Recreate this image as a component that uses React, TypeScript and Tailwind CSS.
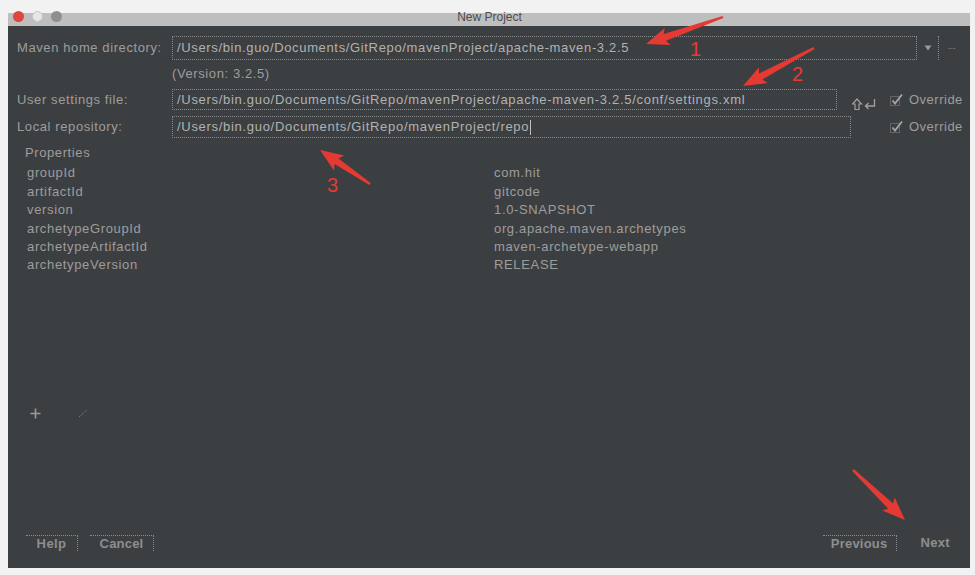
import React from 'react';

const font = { fontFamily: '"Liberation Sans", Arial, sans-serif' };

const properties: [string, string][] = [
  ['groupId', 'com.hit'],
  ['artifactId', 'gitcode'],
  ['version', '1.0-SNAPSHOT'],
  ['archetypeGroupId', 'org.apache.maven.archetypes'],
  ['archetypeArtifactId', 'maven-archetype-webapp'],
  ['archetypeVersion', 'RELEASE'],
];

// red annotation arrow: tail -> tip
function arrowPoints(x1: number, y1: number, x2: number, y2: number) {
  const dx = x2 - x1;
  const dy = y2 - y1;
  const len = Math.hypot(dx, dy);
  const ux = dx / len;
  const uy = dy / len;
  const nx = -uy;
  const ny = ux;
  const head = 20;
  const bx = x2 - ux * head;
  const by = y2 - uy * head;
  const pts = [
    [x1 + nx * 1.2, y1 + ny * 1.2],
    [bx + nx * 3.5, by + ny * 3.5],
    [bx - ux * 3 + nx * 9, by - uy * 3 + ny * 9],
    [x2, y2],
    [bx - ux * 3 - nx * 9, by - uy * 3 - ny * 9],
    [bx - nx * 3.5, by - ny * 3.5],
    [x1 - nx * 1.2, y1 - ny * 1.2],
  ];
  return pts.map((p) => p.map((v) => v.toFixed(1)).join(',')).join(' ');
}

function Check() {
  return (
    <svg width="16" height="14" viewBox="0 0 16 14" className="shrink-0">
      <rect x="1.5" y="3.5" width="9" height="9" fill="none" stroke="#8a8a8a" strokeDasharray="1 1" />
      <path d="M3.5 7.5 L6 10.5 L13 1.5" fill="none" stroke="#a5a5a5" strokeWidth="1.8" />
    </svg>
  );
}

function Label({ children }: { children: React.ReactNode }) {
  return (
    <div className="w-[164px] shrink-0 pl-[9px] text-[13px] tracking-[0.6px] text-[#9d9d9d]">{children}</div>
  );
}

export default function App() {
  return (
    <div className="relative w-[975px] h-[575px] bg-[#f2f2f2] overflow-hidden" style={font}>
      {/* title bar */}
      <div className="relative h-[26px]">
        <div className="absolute left-[8px] right-[5px] top-[13px] bottom-0 bg-[radial-gradient(circle,#bcbcbc_0.7px,transparent_0.9px)] bg-[length:2px_2px]" />
        <div className="relative flex items-center h-full pl-[13px] gap-[8px] pt-[7px]">
          <div className="w-[11px] h-[11px] rounded-full bg-[#e0443e]" />
          <div className="w-[11px] h-[11px] rounded-full border border-[#c5c5c5] bg-[#e6e6e6]" />
          <div className="w-[11px] h-[11px] rounded-full bg-[#8e8e8e]" />
        </div>
        <div className="absolute inset-0 flex justify-center items-center pt-[7px]">
          <span className="ml-[4px] text-[12px] text-[#4c4c4c]">New Project</span>
        </div>
      </div>

      {/* dialog body */}
      <div className="ml-[8px] w-[962px] h-[542px] bg-[#3c3f41] flex flex-col pt-[10px]">
        {/* maven home */}
        <div className="flex items-center h-[24px]">
          <Label>Maven home directory:</Label>
          <div className="w-[745px] h-[24px] border border-dotted border-[#8a8a8a] flex items-center pl-[4px] text-[13px] tracking-[0.65px] text-[#b2b2b2]">
            /Users/bin.guo/Documents/GitRepo/mavenProject/apache-maven-3.2.5
          </div>
          <svg width="8" height="6" viewBox="0 0 8 6" className="ml-[7px]">
            <path d="M0.5 0.5 H7.5 L4 5.5 Z" fill="#9a9a9a" />
          </svg>
          <div className="ml-[6px] h-[24px] border-l border-dotted border-[#8a8a8a]" />
          <span className="ml-[9px] text-[9px] leading-none text-[#9a9a9a] pb-[3px]">...</span>
        </div>

        <div className="flex items-center h-[16px] mt-[6px]">
          <div className="w-[164px]" />
          <span className="text-[13px] tracking-[0.6px] text-[#9d9d9d]">(Version: 3.2.5)</span>
        </div>

        {/* user settings */}
        <div className="flex items-center h-[21px] mt-[7px]">
          <Label>User settings file:</Label>
          <div className="w-[665px] h-[21px] border border-dotted border-[#8a8a8a] flex items-center pl-[4px] text-[13px] tracking-[0.7px] text-[#b2b2b2]">
            /Users/bin.guo/Documents/GitRepo/mavenProject/apache-maven-3.2.5/conf/settings.xml
          </div>
          <svg width="24" height="13" viewBox="0 0 24 13" className="ml-[15px] mt-[10px]">
            <path d="M5 1 L9.5 6 H7 V11.5 H3 V6 H0.5 Z" fill="none" stroke="#a0a0a0" strokeWidth="1.2" />
            <path d="M22.5 1 V8 H14 M16.5 5 L13.5 8 L16.5 11" fill="none" stroke="#a0a0a0" strokeWidth="1.3" />
          </svg>
          <div className="ml-[13px] flex items-center gap-[4px]">
            <Check />
            <span className="text-[13px] tracking-[0.5px] text-[#9d9d9d]">Override</span>
          </div>
        </div>

        {/* local repo */}
        <div className="flex items-center h-[22px] mt-[6px]">
          <Label>Local repository:</Label>
          <div className="w-[679px] h-[22px] border border-dotted border-[#8a8a8a] flex items-center pl-[4px] text-[13px] tracking-[0.7px] text-[#b2b2b2]">
            /Users/bin.guo/Documents/GitRepo/mavenProject/repo
            <span className="ml-[1px] w-px h-[15px] bg-[#c0c0c0]" />
          </div>
          <div className="ml-[38px] flex items-center gap-[4px]">
            <Check />
            <span className="text-[13px] tracking-[0.5px] text-[#9d9d9d]">Override</span>
          </div>
        </div>

        {/* properties */}
        <div className="h-[16px] mt-[7px] pl-[17px] flex items-center text-[13px] tracking-[0.6px] text-[#9d9d9d]">
          Properties
        </div>
        <div className="mt-[3px] pl-[19px] flex flex-col">
          {properties.map(([k, v]) => (
            <div key={k} className="h-[18.4px] flex items-center text-[13px] tracking-[0.65px] text-[#9d9d9d]">
              <span className="w-[467px]">{k}</span>
              <span>{v}</span>
            </div>
          ))}
        </div>

        <div className="flex-1" />

        {/* toolbar */}
        <div className="h-[18px] flex items-center pl-[22px] gap-[37px]">
          <svg width="11" height="11" viewBox="0 0 11 11">
            <path d="M5.5 0.5 V10.5 M0.5 5.5 H10.5" stroke="#9a9a9a" strokeWidth="1.6" />
          </svg>
          <svg width="10" height="9" viewBox="0 0 10 9">
            <path d="M1 8 L9 1" stroke="#8a8a8a" strokeWidth="1" strokeDasharray="1 1" />
          </svg>
        </div>

        {/* footer */}
        <div className="mt-[111px] mb-[15px] h-[20px] flex items-center pl-[18px] pr-[20px]">
          <div className="w-[52px] h-[16px] border-t border-r border-dotted border-[#8a8a8a] flex items-center justify-center text-[13px] font-bold tracking-[0.4px] text-[#8e8e8e]">
            Help
          </div>
          <div className="ml-[12px] w-[64px] h-[16px] border-t border-r border-dotted border-[#8a8a8a] flex items-center justify-center text-[13px] font-bold tracking-[0.2px] text-[#8e8e8e]">
            Cancel
          </div>
          <div className="flex-1" />
          <div className="w-[74px] h-[16px] border-t border-r border-dotted border-[#8a8a8a] flex items-center justify-center text-[13px] font-bold tracking-[0.2px] text-[#8e8e8e]">
            Previous
          </div>
          <div className="ml-[24px] text-[13px] font-bold tracking-[0.3px] text-[#8e8e8e]">Next</div>
        </div>
      </div>

      {/* red annotations */}
      <svg className="absolute inset-0 pointer-events-none" width="975" height="575">
        <polygon points={arrowPoints(723, 17, 646, 44)} fill="#e53a33" />
        <polygon points={arrowPoints(814, 48, 743, 86)} fill="#e53a33" />
        <polygon points={arrowPoints(370, 184, 320, 150)} fill="#e53a33" />
        <polygon points={arrowPoints(853, 470, 905, 520)} fill="#e53a33" />
      </svg>
      <span className="absolute left-[690px] top-[39px] text-[20px] leading-none font-light text-[#e53a33]">1</span>
      <span className="absolute left-[792px] top-[64px] text-[20px] leading-none font-light text-[#e53a33]">2</span>
      <span className="absolute left-[327px] top-[175px] text-[20px] leading-none font-light text-[#e53a33]">3</span>
    </div>
  );
}
